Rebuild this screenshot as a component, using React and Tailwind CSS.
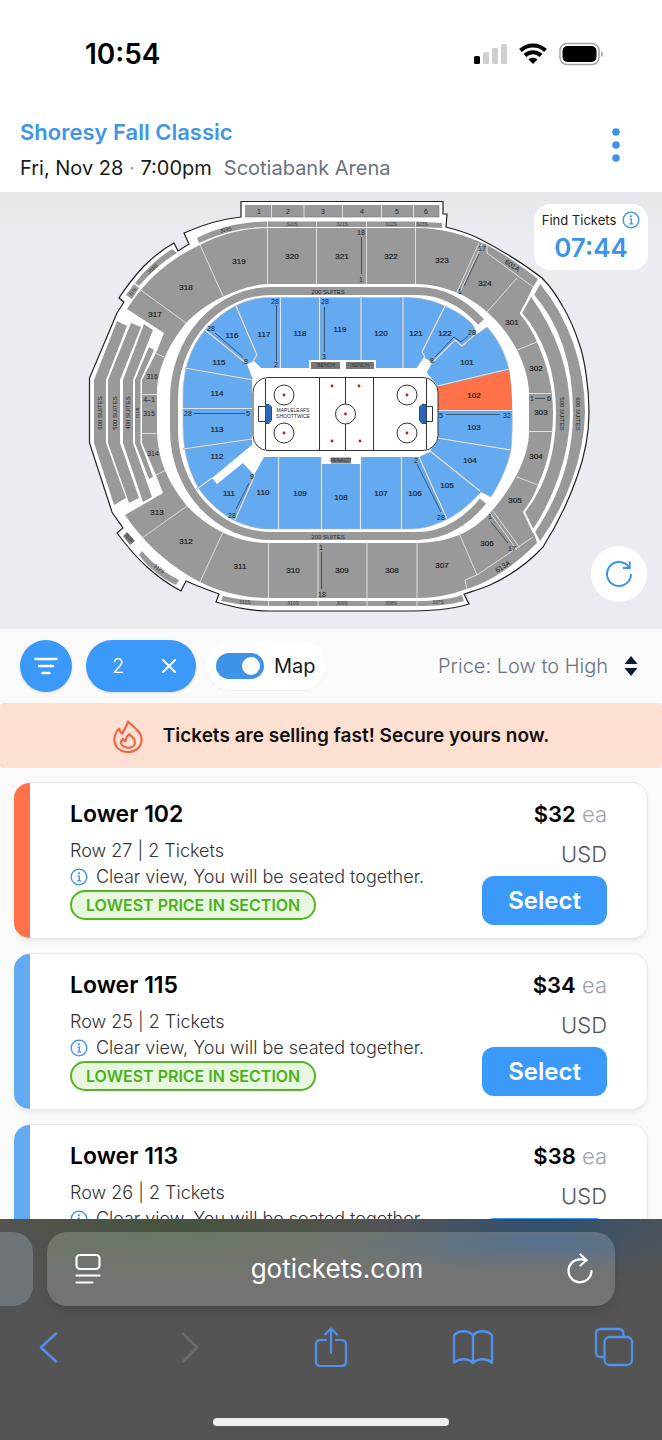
import React, { useState } from "react";

// Seat map labels: [text, x, y]
const UPPER_LABELS = [
  ["319", 239, 262], ["320", 292, 257], ["321", 342, 257], ["322", 391, 257],
  ["323", 442, 261], ["324", 485, 284], ["301", 512, 323], ["302", 536, 369],
  ["303", 541, 413], ["304", 536, 457], ["305", 515, 501], ["306", 487, 544],
  ["307", 442, 566], ["308", 392, 571], ["309", 342, 571], ["310", 293, 571],
  ["311", 240, 567], ["312", 186, 542], ["313", 157, 513], ["317", 155, 315],
  ["318", 186, 288],
];

const LOWER_LABELS = [
  ["101", 467, 363], ["102", 474, 396], ["103", 474, 428], ["104", 470, 461],
  ["105", 447, 486], ["106", 415, 494], ["107", 381, 494], ["108", 341, 498],
  ["109", 300, 494], ["110", 263, 493], ["111", 229, 494], ["112", 217, 457],
  ["113", 217, 430], ["114", 217, 394], ["115", 219, 363], ["116", 232, 336],
  ["117", 264, 335], ["118", 300, 334], ["119", 340, 330], ["120", 381, 334],
  ["121", 416, 334], ["122", 445, 334],
];

const SMALL_LABELS = [
  ["28", 275, 302], ["2", 276, 365], ["28", 325, 302], ["3", 324, 357],
  ["28", 211, 329], ["8", 246, 362], ["28", 188, 414], ["5", 248, 414],
  ["9", 252, 477], ["28", 232, 516], ["2", 416, 461], ["28", 441, 518],
  ["5", 441, 416], ["32", 507, 416], ["28", 472, 333], ["8", 432, 361],
  ["18", 361, 233], ["1", 361, 280], ["17", 482, 249], ["1", 460, 292],
  ["1", 532, 399], ["6", 549, 399], ["1", 321, 548], ["18", 322, 595],
  ["1", 490, 517], ["17", 512, 549], ["4–1", 149, 400],
  ["316", 152, 377], ["315", 149, 414], ["314", 153, 454],
];

const BOX_LABELS = [
  ["1", 259, 212], ["2", 288, 212], ["3", 323, 212],
  ["4", 362, 212], ["5", 397, 212], ["6", 426, 212],
];

const TINY_LABELS = [
  ["320S", 292, 225], ["321S", 342, 225], ["322S", 391, 225], ["323S", 422, 225],
  ["311S", 245, 603], ["310S", 293, 604], ["309S", 342, 604], ["308S", 391, 604],
  ["307S", 438, 603], ["BENCH", 326, 366], ["BENCH", 360, 366], ["PENALTY", 341, 461],
];

// [text, x, y, angle, size]
const TURNED_LABELS = [
  ["600 SUITES", 100, 413, -90, 6], ["500 SUITES", 115, 413, -90, 6],
  ["400 SUITES", 128, 413, -90, 6], ["CLUB", 138, 413, -90, 4],
  ["500 SUITES", 562, 414, 90, 6], ["600 SUITES", 578, 414, 90, 6],
  ["601A", 512, 266, 33, 7], ["613A", 503, 567, -33, 7],
  ["319S", 226, 230, -14, 5], ["318S", 153, 269, -42, 5], ["317S", 133, 292, -50, 4],
  ["313S", 129, 538, 50, 4], ["312S", 159, 569, 38, 5],
];

function Labels({ items, size }) {
  return items.map(([text, x, y]) => (
    <text key={`${text}-${x}-${y}`} x={x} y={y} fontSize={size}>
      {text}
    </text>
  ));
}

// Arena seat map
function SeatMap() {
  return (
    <svg
      viewBox="0 192 662 437"
      className="block w-full h-auto font-['Liberation_Sans',sans-serif]"
      role="img"
      aria-label="Scotiabank Arena seat map"
    >
      {/* Building outline */}
      <path
        d="M241 201.500H443V214H447L446 227C458 230 470 234 480 239C503 251 524 264 542 278C551 287 557 296 563 307C571 320 575 331 579 343C584 357 589 385 589 412C589 438 584 458 577 477C570 497 560 520 543 547C528 563 510 576 490 585C481 589 473 591 464 594L469 604C450 610 430 611 400 611H270C250 611 232 607 216 602L219 594C208 590 197 586 186 581L181 591C168 584 158 577 147 567C136 557 126 545 117 533L123 528C119 522 115 517 112 512L89.500 443V378L117 313L124 302L119 298C126 287 134 277 143 267C152 258 163 249 174 243L178 251L189 244L184 233C202 225 220 219 241 217Z"
        fill="#fff"
        stroke="#222"
        strokeWidth="1.200"
      />

      {/* 300 level */}
      <path
        fillRule="evenodd"
        d="M200 245C220 234 245 228 268 228H416C442 228 466 235 487 245C505 254 522 267 538 279L533 287L520 314C527 322 532 331 537 342C547 364 553 387 553 412C553 440 548 463 538 485C534 495 530 503 524 512L533 528L537 543C516 564 494 580 467 589C450 595 435 598 417 598H268C244 598 220 592 200 582C172 567 147 547 125 515L163 493L156 475L142 443V380L156 353L164 333L127 309C148 276 174 257 200 245ZM268 284C243 285 208 300 186 323C164 350 157 375 157 393V433C158 460 168 483 187 506C208 529 238 543 268 543H417C450 542 471 533 490 513C517 483 529 452 529 432V393C529 373 517 338 487 312C470 296 443 284 416 284Z"
        fill="#999"
      />
      <g fill="none" stroke="#dedede" strokeWidth="1">
        <path d="M267.500 228V284M316.500 228V284M366.500 228V284M415.500 228V284M479 243L457 292M482 244L460 292M517 278L487 312M487 245V253L533 287M517 350L537 342M529 393.500H551M529 431.500H553M517 477L538 485M490 513L517 550M493 511L520 548M533 537L477 575L465 580L467 589M459 533L477 575M417 543V598M367 543V598M318 543V598M268.500 543V598M223 532L200 582M187 506L142 538M156 475L166 470M142 433.500H157M142 394.500H157M155 353L164 357M138 288L186 323M200 245L223 296" />
      </g>

      {/* Numbered boxes and outer strips */}
      <g fill="#999">
        <path d="M245.500 205.500H439V217H245.500Z" stroke="#666" strokeWidth=".5" />
        <path d="M197 238C220 226 245 221.500 268 221.500H416L442 223V228L416 227H268C245 227 225 231 199 243Z" />
        <path d="M172 249L177 253C162 262 150 273 139 286L135 283C146 269 158 258 172 249Z" />
        <path d="M134 284L139 288L132 299L126 295Z" />
        <path d="M223 596C240 600 255 601 268 601H417C435 601 450 599 462 595L464 601C450 605 435 606 417 606H268C250 606 235 604 221 601Z" />
        <path d="M142 551C153 564 165 573 179 580L176 585C161 578 149 568 139 555Z" />
        <path d="M127 532L135 541L130 545L123 536Z" fill="#777" />
      </g>
      <path d="M271.500 205V217M304 205V217M342.500 205V217M381.500 205V217M413.500 205V217M267.500 221V227M316.500 221V227M366.500 221V227M415.500 221V227M268.500 601V606M318 601V606M367 601V606M417 601V606" stroke="#ddd" />

      {/* Side suites */}
      <g fill="#999">
        <path d="M117 321L127 326L106 380V443L126 498L114 505L94 443V380Z" />
        <path d="M131 323L141 327L120 380V443L139 498L129 503L108 443V380Z" />
        <path d="M144 324L153 330L133 380V443L152 497L143 502L123 443V380Z" />
        <path d="M149 347L154 350L140.500 380V443L153 477L149 479L135 443V380Z" />
      </g>
      <g fill="#999" stroke="#fff" strokeWidth="2">
        <path d="M531 295C558 333 571 370 571 413C571 455 554 500 533 531L524 512C547 483 555 450 555 413C555 375 544 340 521 313Z" />
        <path d="M540 282C570 318 586 365 586 413C585 457 568 504 540 543L534 532C559 495 572 457 572 413C572 365 559 325 533 295Z" />
      </g>

      {/* 200 suites */}
      <path
        d="M481 322C461 300 440 291 417 291H271A97 108 0 0 0 174 399V430A97 106 0 0 0 271 536H417C445 536 468 520 483 501"
        fill="none"
        stroke="#fff"
        strokeWidth="12"
      />
      <path
        d="M481 322C461 300 440 291 417 291H271A97 108 0 0 0 174 399V430A97 106 0 0 0 271 536H417C445 536 468 520 483 501"
        fill="none"
        stroke="#999"
        strokeWidth="8"
      />

      {/* Lower bowl */}
      <path
        d="M268 297.500C240 298 220 314 205 330C190 348 183 370 183 395V425C183 450 188 470 199 489C208 502 222 514 233 520C245 526 258 529 268 529H411C425 529 437 524 448 519C461 512 472 502 481 492L491 497C500 483 508 465 511 450C513 430 513 400 509 369C505 353 498 339 487 327L477 334L473 325C465 316 455 311 445 306C430 299 418 297.500 403 297.500Z"
        fill="#63aaf1"
        stroke="#b9b9b9"
        strokeWidth=".6"
      />
      <path d="M437 386L509 369C511 383 512 395 512 410H437Z" fill="#ff7149" />
      {[
        ["#7f9fc0", 2.2],
        ["#dfe5ec", 1.2],
      ].map(([color, width]) => (
        <path
          key={color}
          d="M280.500 298V368M319.500 298V360M361 298V360M403 298V368M278.500 457V529M321.500 457V529M360.500 457V529M401.500 457V529M236 306L257 355L253 361M205 330L247 364M185 368L253 380M183 408.500H252M183 449L252 439M197 489L212 478M235 520L255 475M419 457L447 519M430 451L480 491M437 438L511 450M437 410.500H512M437 386L509 369M432 363L455 340L462 346L477 333M445 306L422 352L425 357"
          fill="none"
          stroke={color}
          strokeWidth={width}
        />
      ))}
      <g fill="#fff">
        <path d="M262 368H309V360H376V368H418L427 373L437 385V437L430 452L419 457H361V464H322V457H262L252 445V380Z" />
        <path d="M247 364L254 361L263 370L253 380Z" />
        <path d="M252 445L212 478L217 484L243 463L254 475L264 457Z" />
        <path d="M416 369L424 357L432 363L426 374Z" />
      </g>

      {/* Row guides */}
      <path
        d="M276.500 305V361M324.500 307V352M215 333L243 357M193.500 413.500H245M249 483L236 509M417 464L441 512M446 414.500H500M468 336L461 342L454 337L435 357M361.500 237V274M479 254L464 286M535 398.500H545M321.500 552V589M491 522L508 543"
        fill="none"
        stroke="#2b3f55"
        strokeWidth=".8"
      />

      {/* Rink */}
      <g fill="none" stroke="#333" strokeWidth="1">
        <rect x="253" y="377.500" width="185" height="73" rx="15" fill="#fff" />
        <path d="M265.500 379V449M319.500 378V450M345.500 378V450M373.500 378V450M426.500 379V449" />
        <circle cx="345.500" cy="414" r="10" fill="#fff" />
        {[[284, 395], [284, 433], [407, 395], [407, 433]].map(([x, y]) => (
          <circle key={`${x}-${y}`} cx={x} cy={y} r="10" />
        ))}
        <path d="M265 406.500H258.500V421.500H265M426 406.500H432.500V421.500H426" />
        <path d="M265.500 404.500H269L271.500 407V420L269 423.500H265.500ZM426 404.500H422L419.500 407V420L422 423.500H426Z" fill="#2f67b8" stroke="#24508f" />
      </g>
      <g fill="#c4161c">
        {[
          [284, 395], [284, 433], [407, 395], [407, 433], [345.5, 414],
          [332, 386], [332, 441], [359, 386], [360, 441],
        ].map(([x, y]) => (
          <circle key={`${x}-${y}`} cx={x} cy={y} r="1.400" />
        ))}
      </g>
      <g fill="#777">
        <rect x="311" y="362" width="29" height="7" />
        <rect x="346" y="362" width="28" height="7" />
        <rect x="331" y="457.500" width="20" height="6" />
      </g>

      {/* Text */}
      <g fill="#1b1f24" textAnchor="middle" dominantBaseline="middle">
        <g stroke="#1b1f24" strokeWidth=".2">
          <Labels items={UPPER_LABELS} size={8} />
          <Labels items={LOWER_LABELS} size={8} />
        </g>
        <Labels items={SMALL_LABELS} size={7} />
        <Labels items={BOX_LABELS} size={7} />
        <g opacity=".75">
          <Labels items={TINY_LABELS} size={5} />
        </g>
        <text x="328" y="292" fontSize="6">200 SUITES</text>
        <text x="328" y="537" fontSize="6">200 SUITES</text>
        <text x="293" y="411" fontSize="5">MAPLELEAFS</text>
        <text x="293" y="417" fontSize="5">SHOOTTWICE</text>
        {TURNED_LABELS.map(([text, x, y, angle, size]) => (
          <text
            key={`${text}-${x}`}
            x={x}
            y={y}
            fontSize={size}
            transform={`rotate(${angle} ${x} ${y})`}
          >
            {text}
          </text>
        ))}
      </g>
    </svg>
  );
}

function InfoIcon({ className }) {
  return (
    <svg viewBox="0 0 20 20" className={className} fill="none" stroke="#3e93e8" strokeWidth="1.500" aria-hidden="true">
      <circle cx="10" cy="10" r="8.700" />
      <path d="M8.300 9H10.300V14.200M8 14.300H12.500" />
      <circle cx="10" cy="5.900" r=".5" fill="#3e93e8" />
    </svg>
  );
}

// iOS status bar
function StatusBar() {
  return (
    <div className="flex shrink-0 items-center justify-between h-[108px] pl-[85px] pr-[58px] text-black">
      <span className="text-[28px] leading-8 font-semibold">10:54</span>
      <div className="flex items-center gap-3">
        <svg viewBox="0 0 33 22" className="w-[33px] h-[22px]" aria-hidden="true">
          <rect x="0" y="13" width="6" height="8" rx="1.500" />
          <g fill="#cfcfcf">
            <rect x="9" y="9" width="6" height="12" rx="1.500" />
            <rect x="18" y="5" width="6" height="16" rx="1.500" />
            <rect x="27" y="1" width="6" height="20" rx="1.500" />
          </g>
        </svg>
        <svg viewBox="0 0 28 22" className="w-7 h-[22px]" fill="none" stroke="#000" strokeWidth="4" aria-hidden="true">
          <path d="M1.500 7.500C8.500 .8 19.500 .8 26.500 7.500" />
          <path d="M6 12.500C10.500 8.300 17.500 8.300 22 12.500" />
          <path d="M9.500 16.500C12 14.200 16 14.200 18.500 16.500L14 21Z" fill="#000" stroke="none" />
        </svg>
        <svg viewBox="0 0 45 24" className="w-[45px] h-6" aria-hidden="true">
          <rect x="1" y="1.500" width="39" height="21" rx="7" fill="none" stroke="#a3a3a3" strokeWidth="1.500" />
          <rect x="3.500" y="4" width="34" height="16" rx="5" />
          <path d="M42 9C44.500 10 44.500 14 42 15Z" fill="#a3a3a3" />
        </svg>
      </div>
    </div>
  );
}

function EventHeader() {
  return (
    <header className="flex shrink-0 items-start justify-between h-[84px] pl-5 pr-9">
      <div>
        <h1 className="mt-2 text-[22px] leading-8 font-semibold text-[#4095e5]">Shoresy Fall Classic</h1>
        <p className="flex gap-3 mt-1 text-xl leading-8 text-[#1a1a1a]">
          <span>
            Fri, Nov 28 <span className="text-gray-400">·</span> 7:00pm
          </span>
          <span className="text-gray-500">Scotiabank Arena</span>
        </p>
      </div>
      <button type="button" aria-label="More options" className="mt-5 px-1.5">
        <svg viewBox="0 0 8 34" className="w-2 h-[34px]" fill="#3e93e8" aria-hidden="true">
          <circle cx="4" cy="4" r="3.800" />
          <circle cx="4" cy="17" r="3.800" />
          <circle cx="4" cy="30" r="3.800" />
        </svg>
      </button>
    </header>
  );
}

function MapPanel() {
  return (
    <section className="relative shrink-0 bg-[#ebecf1] bg-linear-to-b from-[#e6e7eb] to-[#ebecf1] to-10%">
      <SeatMap />
      {/* Countdown */}
      <div className="absolute top-3 right-3.5 w-[114px] h-[66px] pt-1 rounded-2xl bg-white text-center">
        <div className="flex items-center justify-center gap-1.5 text-[13px] leading-6 text-[#222]">
          Find Tickets
          <InfoIcon className="w-[18px] h-[18px]" />
        </div>
        <div className="text-[26px] leading-8 font-semibold text-[#3e93e8]">07:44</div>
      </div>
      <button
        type="button"
        aria-label="Reset map"
        className="absolute bottom-[27px] right-[15px] flex items-center justify-center w-14 h-14 rounded-full bg-white"
      >
        <svg viewBox="0 0 28 28" className="w-7 h-7" fill="none" stroke="#3e93e8" strokeWidth="2" aria-hidden="true">
          <path d="M26 14A12 12 0 1 1 24 7.400" />
          <path d="M24.700 1.500V8H18" />
        </svg>
      </button>
    </section>
  );
}

// Filter row
function Toolbar() {
  const [showMap, setShowMap] = useState(true);
  return (
    <div className="flex shrink-0 items-center h-[74px] pl-5 pr-6">
      <button
        type="button"
        aria-label="Filters"
        className="flex items-center justify-center w-13 h-13 rounded-full bg-[#3b99fa] shadow-sm"
      >
        <svg viewBox="0 0 24 18" className="w-6 h-[18px]" stroke="#fff" strokeWidth="2.400" strokeLinecap="round" aria-hidden="true">
          <path d="M1.500 2H22.500M5 9H19M8.500 16H15.500" />
        </svg>
      </button>
      <button
        type="button"
        aria-label="Clear quantity: 2"
        className="flex items-center justify-between w-[110px] h-13 ml-3.5 pl-[26px] pr-5 rounded-full bg-[#3b99fa] text-xl font-light text-white shadow-sm"
      >
        2
        <svg viewBox="0 0 14 14" className="w-3.5 h-3.5" stroke="#fff" strokeWidth="2" strokeLinecap="round" aria-hidden="true">
          <path d="M1 1L13 13M13 1L1 13" />
        </svg>
      </button>
      <label className="flex items-center gap-2.5 h-12 ml-2.5 px-2.5 rounded-full bg-white text-xl text-[#1a1a1a] shadow-xs">
        <input
          type="checkbox"
          checked={showMap}
          onChange={() => setShowMap(!showMap)}
          className="peer sr-only"
        />
        <span className="flex justify-start w-12 h-[26px] p-1 rounded-full bg-gray-300 peer-checked:bg-[#3e93e8] peer-checked:justify-end">
          <span className="w-[18px] h-[18px] rounded-full bg-white"></span>
        </span>
        Map
      </label>
      <div className="flex items-center gap-4 ml-auto text-xl text-gray-500">
        <select aria-label="Sort by" className="appearance-none bg-transparent text-right font-light">
          <option>Price: Low to High</option>
          <option>Price: High to Low</option>
        </select>
        <svg viewBox="0 0 14 20" className="w-3.5 h-5" fill="#0a1a2f" aria-hidden="true">
          <path d="M7 0L13.500 8H.5ZM7 20L.5 12H13.500Z" />
        </svg>
      </div>
    </div>
  );
}

function SellingFastBanner() {
  return (
    <div className="flex shrink-0 items-center justify-center gap-5 h-[65px] pt-0.5 rounded-sm bg-[#fee0d3]">
      <svg viewBox="0 0 32 36" className="w-[30px] h-[34px]" fill="none" stroke="#ec6643" strokeWidth="2.300" strokeLinejoin="round" aria-hidden="true">
        <path d="M16 1.500C15 7 11 10.500 10 14.500C8 13.500 7 11.500 6.500 9C3 12.500 1.500 17 1.500 21C1.500 29 8 34 16 34S30.500 29 30.500 20.500C30.500 12 22.500 8.500 16 1.500Z" />
        <path d="M17.500 15C19.500 18 23.500 19 23.500 23.500C23.500 27.500 20 29.500 16 29.500S8.500 27 8.500 23.500C8.500 21.500 9.500 20.500 10.500 20C11.500 21.500 12 22 13.500 22.500C13.500 19.500 15 17 17.500 15Z" />
      </svg>
      <p className="text-[19px] font-semibold text-[#111]">Tickets are selling fast! Secure yours now.</p>
    </div>
  );
}

const LISTINGS = [
  { section: "Lower 102", row: "Row 27", price: "$32", color: "border-[#ff7149]" },
  { section: "Lower 115", row: "Row 25", price: "$34", color: "border-[#63aaf1]" },
  { section: "Lower 113", row: "Row 26", price: "$38", color: "border-[#63aaf1]" },
];

// Ticket listing card
function TicketCard({ section, row, price, color }) {
  return (
    <li className="shrink-0 rounded-2xl bg-white border border-l-0 border-gray-200 shadow-md shadow-black/5 overflow-hidden">
      <div className={`flex justify-between h-[155px] border-l-16 px-10 ${color}`}>
        <div className="pt-[15px]">
          <h2 className="text-[23px] leading-8 font-semibold text-black">{section}</h2>
          <p className="mt-2 text-lg leading-[26px] font-light text-[#333]">{row} | 2 Tickets</p>
          <p className="flex items-center gap-2 text-lg leading-[26px] font-light text-[#333]">
            <InfoIcon className="w-[18px] h-[18px]" />
            Clear view, You will be seated together.
          </p>
          <span className="inline-flex items-center h-[30px] px-3.5 rounded-full border-2 border-[#55b522] bg-[#e8f7e0] text-base font-semibold text-[#4cb01c]">
            LOWEST PRICE IN SECTION
          </span>
        </div>
        <div className="flex flex-col items-end pt-[15px]">
          <p className="text-[22px] leading-8 font-light text-gray-400">
            <span className="font-semibold text-black">{price}</span> ea
          </p>
          <p className="mt-2 text-[22px] leading-8 font-light text-[#555]">USD</p>
          <button
            type="button"
            aria-label={`Select ${section}`}
            className="w-[125px] h-[49px] mt-1.5 rounded-xl bg-[#3b99fa] text-2xl font-semibold text-white"
          >
            Select
          </button>
        </div>
      </div>
    </li>
  );
}

// Safari bottom bar
function BrowserBar() {
  return (
    <footer className="relative flex flex-col shrink-0 bg-[#545454] bg-[radial-gradient(ellipse_at_27%_0%,#46533c_0%,transparent_30%),radial-gradient(ellipse_at_82%_0%,#30506f_0%,transparent_22%)]">
      <div className="flex gap-3.5 pt-[13px] pr-[47px]">
        <div className="w-[33px] rounded-r-[20px] bg-[#6d7377]"></div>
        <div className="flex flex-1 items-center justify-between h-[74px] px-[22px] rounded-[20px] bg-[#737373] bg-[radial-gradient(ellipse_at_22%_0%,#6a7864_0%,transparent_50%),radial-gradient(ellipse_at_88%_15%,#56728e_0%,transparent_32%)] shadow-lg shadow-black/10">
          <button type="button" aria-label="Page menu" className="px-1.5">
            <svg viewBox="0 0 26 32" className="w-[26px] h-8" fill="none" stroke="#fff" strokeWidth="2.200" strokeLinecap="round" aria-hidden="true">
              <rect x="1.500" y="2" width="23" height="14" rx="3.500" />
              <path d="M1.500 22.500H24.500M1.500 29.500H17.500" />
            </svg>
          </button>
          <span className="text-[26px] leading-8 text-white">gotickets.com</span>
          <button type="button" aria-label="Reload">
            <svg viewBox="0 0 26 32" className="w-[26px] h-8" fill="none" stroke="#fff" strokeWidth="2.200" strokeLinecap="round" strokeLinejoin="round" aria-hidden="true">
              <path d="M19.500 7.300C17.500 6 15.300 6.300 13 6.300A11.500 11.500 0 1 0 24.500 18" />
              <path d="M13.500 1.500L19.500 7L13.500 12.500" />
            </svg>
          </button>
        </div>
      </div>
      <nav className="flex items-center justify-between h-[82px] px-6 text-[#5191ee]">
        <button type="button" aria-label="Back" className="flex justify-center w-12">
          <svg viewBox="0 0 22 32" className="w-[22px] h-8" fill="none" stroke="currentColor" strokeWidth="2.500" strokeLinecap="round" strokeLinejoin="round">
            <path d="M19 2.500L4 16.500L19 30.500" />
          </svg>
        </button>
        <button type="button" aria-label="Forward" disabled className="flex justify-center w-12 text-[#6c6c6c]">
          <svg viewBox="0 0 22 32" className="w-[22px] h-8" fill="none" stroke="currentColor" strokeWidth="2.500" strokeLinecap="round" strokeLinejoin="round">
            <path d="M4 2.500L18 16.500L4 30.500" />
          </svg>
        </button>
        <button type="button" aria-label="Share" className="flex justify-center w-12">
          <svg viewBox="0 0 34 42" className="w-[34px] h-[42px]" fill="none" stroke="currentColor" strokeWidth="2.200" strokeLinecap="round" strokeLinejoin="round">
            <path d="M12 14H6.500C3.500 14 2 15.500 2 18.500V35.500C2 38.500 3.500 40 6.500 40H27.500C30.500 40 32 38.500 32 35.500V18.500C32 15.500 30.500 14 27.500 14H22M17 27V2.500M11 8.500L17 2.500L23 8.500" />
          </svg>
        </button>
        <button type="button" aria-label="Bookmarks" className="flex justify-center w-12">
          <svg viewBox="0 0 42 36" className="w-[42px] h-9" fill="none" stroke="currentColor" strokeWidth="2.300" strokeLinecap="round" strokeLinejoin="round">
            <path d="M21 6.500C17 .8 6 .8 2 6.500V34C7 29 16 29 21 34C26 29 35 29 40 34V6.500C36 .8 25 .8 21 6.500ZM21 6.500V34" />
          </svg>
        </button>
        <button type="button" aria-label="Tabs" className="flex justify-center w-12">
          <svg viewBox="0 0 40 40" className="w-10 h-10" fill="none" stroke="currentColor" strokeWidth="2.300" strokeLinejoin="round">
            <path d="M10.500 30H7C4 30 2 28.500 2 25.500V7C2 4 4 2 7 2H24.500C27.500 2 29.500 4 29.500 7V10" />
            <rect x="10.500" y="10" width="27.500" height="28" rx="5" />
          </svg>
        </button>
      </nav>
      <div className="w-[236px] h-2 mx-auto mt-[30px] mb-[14px] rounded-full bg-[#eee]"></div>
    </footer>
  );
}

function App() {
  return (
    <div className="flex flex-col h-screen overflow-hidden bg-white font-[Inter,sans-serif]">
      <StatusBar />
      <EventHeader />
      <main className="flex flex-col flex-1 min-h-0 overflow-hidden bg-[#fafafa]">
        <MapPanel />
        <Toolbar />
        <SellingFastBanner />
        <ul className="flex flex-col gap-3.5 p-3.5">
          {LISTINGS.map((listing) => (
            <TicketCard key={listing.section} {...listing} />
          ))}
        </ul>
      </main>
      <BrowserBar />
    </div>
  );
}

export default App;
